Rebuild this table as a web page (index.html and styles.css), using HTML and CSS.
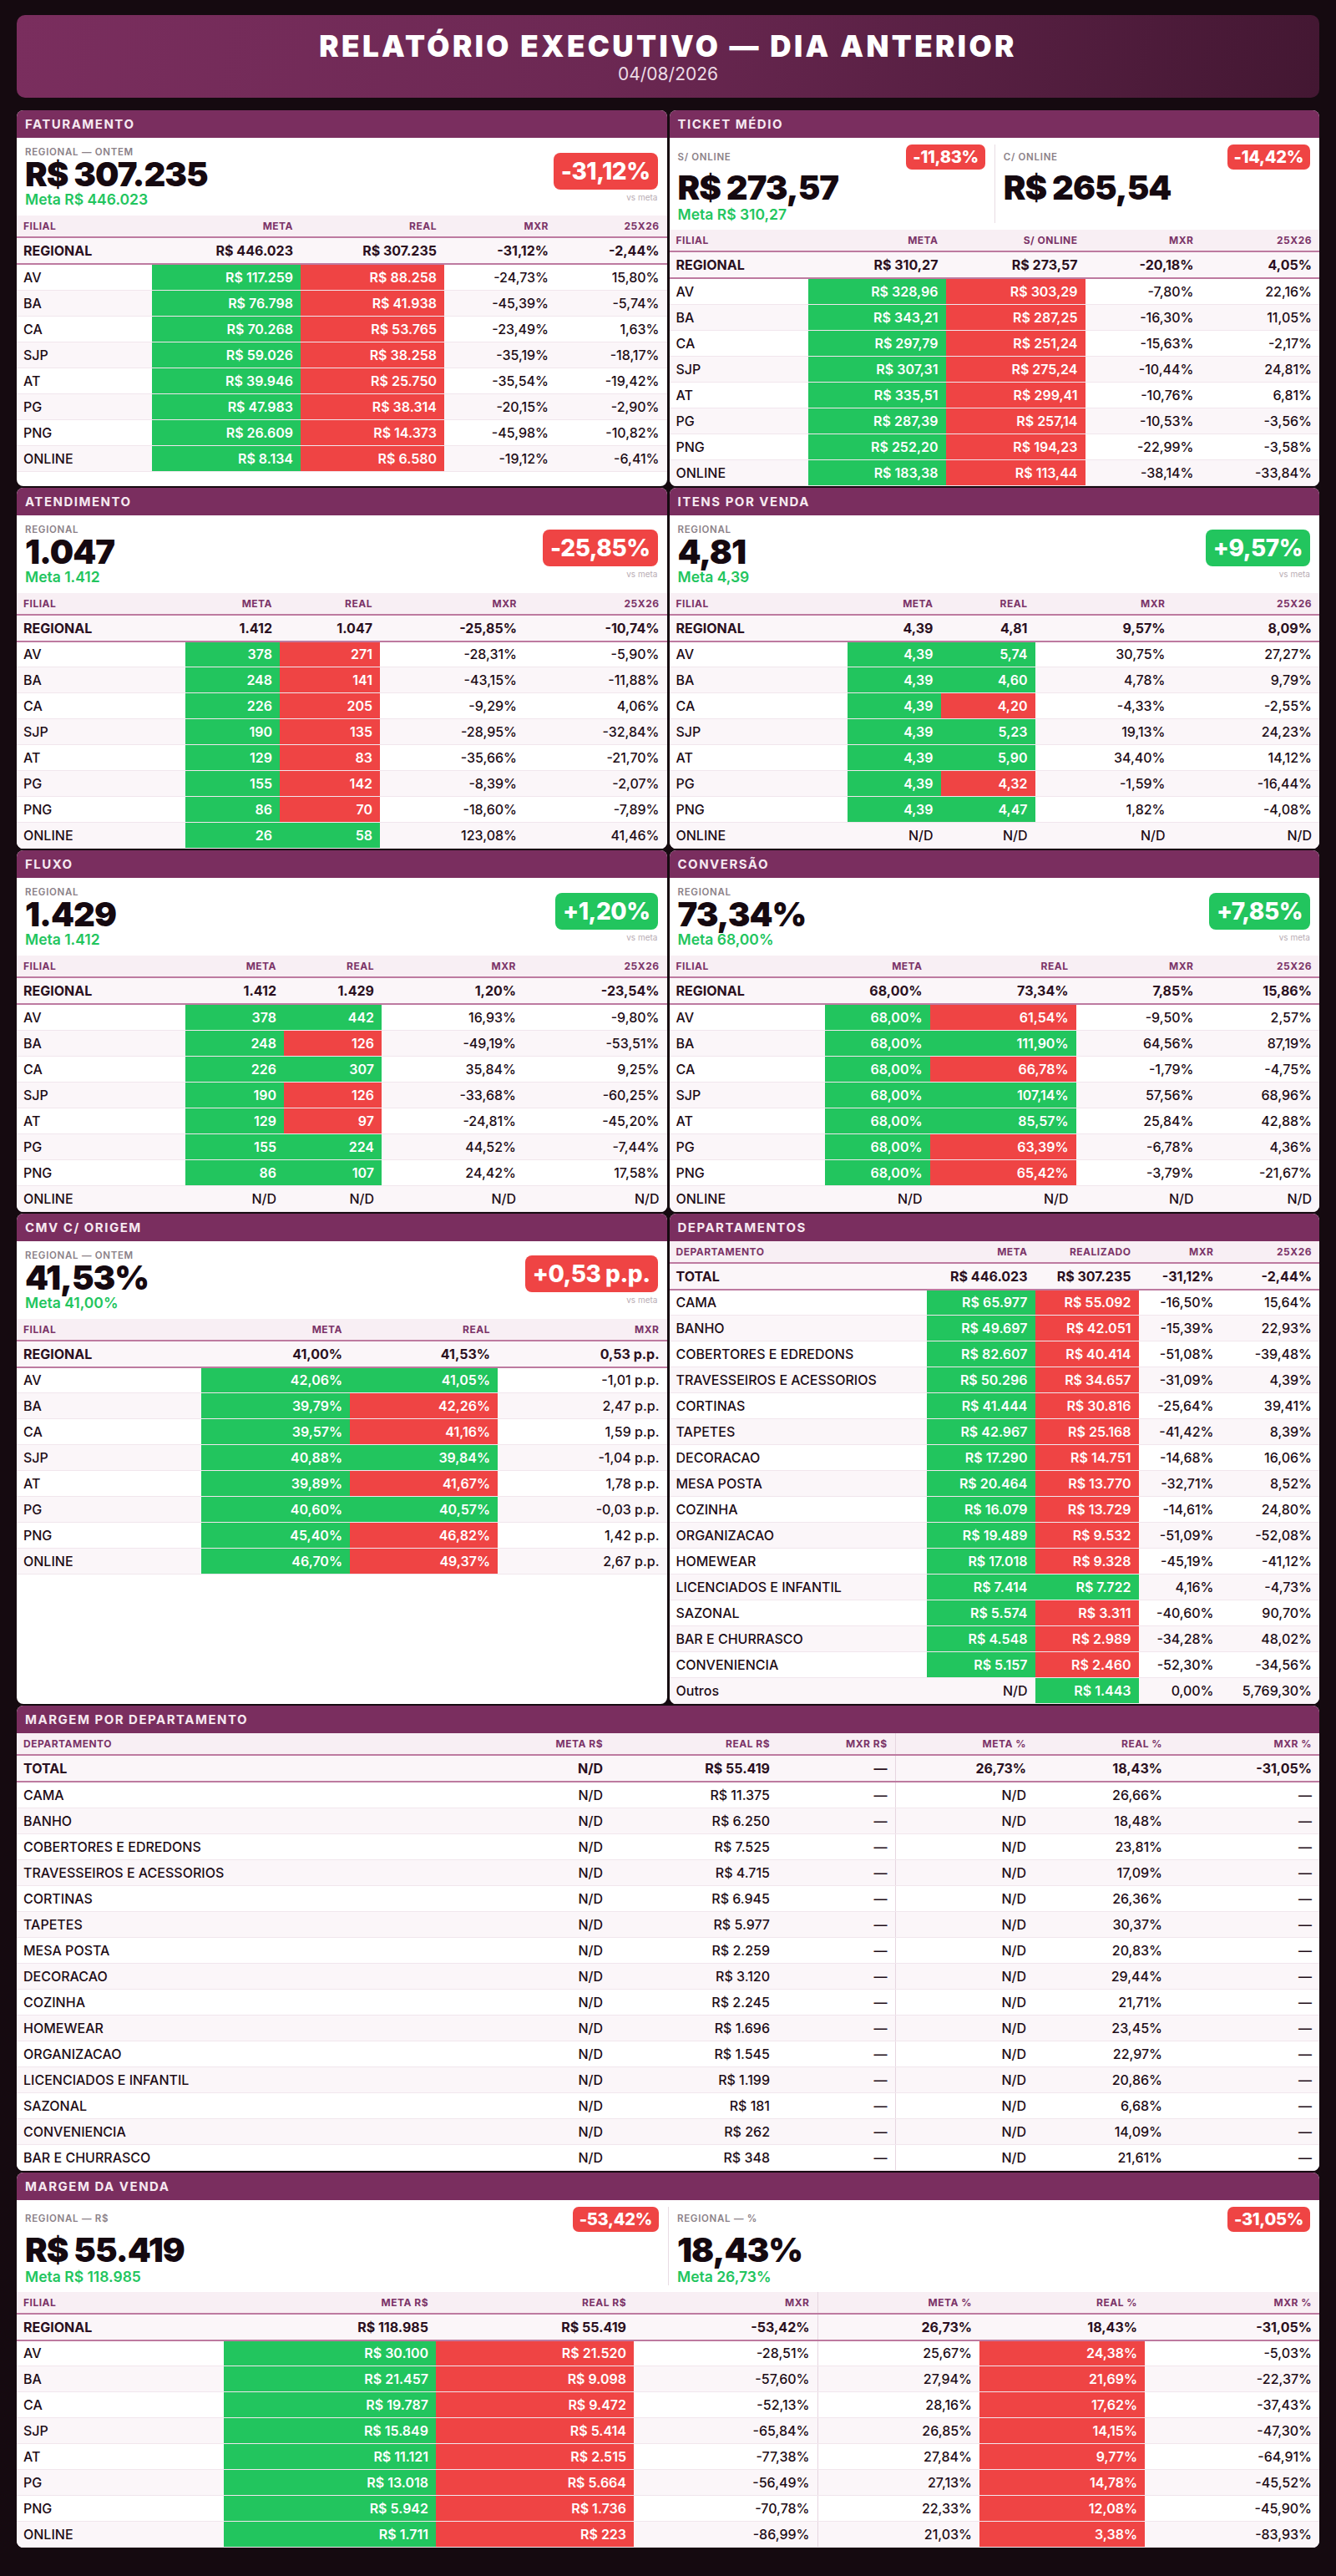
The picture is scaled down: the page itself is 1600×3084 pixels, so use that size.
FILE: index.html
```html
<!DOCTYPE html>
<html lang="pt-BR">
<head>
<meta charset="utf-8">
<title>Relatório Executivo — Dia Anterior</title>
<link rel="stylesheet" href="styles.css">
</head>
<body>
<div class="page">
  <header class="hero">
    <h1>RELATÓRIO EXECUTIVO — DIA ANTERIOR</h1>
    <div class="hero-date">04/08/2026</div>
  </header>

  <main class="grid">
    <!-- FATURAMENTO -->
    <section class="card">
      <div class="card-title">FATURAMENTO</div>
      <div class="kpi">
        <div class="kpi-main">
          <div class="kpi-label">REGIONAL — ONTEM</div>
          <div class="kpi-value">R$ 307.235</div>
          <div class="kpi-meta">Meta R$ 446.023</div>
        </div>
        <div class="badge-wrap">
          <div class="badge neg">-31,12%</div>
          <div class="vs">vs meta</div>
        </div>
      </div>
      <table class="tbl t-fat">
        <thead><tr><th>FILIAL</th><th>META</th><th>REAL</th><th>MXR</th><th>25X26</th></tr></thead>
        <tbody>
          <tr class="reg"><td>REGIONAL</td><td>R$ 446.023</td><td>R$ 307.235</td><td>-31,12%</td><td>-2,44%</td></tr>
          <tr><td>AV</td><td class="g">R$ 117.259</td><td class="r">R$ 88.258</td><td>-24,73%</td><td>15,80%</td></tr>
          <tr><td>BA</td><td class="g">R$ 76.798</td><td class="r">R$ 41.938</td><td>-45,39%</td><td>-5,74%</td></tr>
          <tr><td>CA</td><td class="g">R$ 70.268</td><td class="r">R$ 53.765</td><td>-23,49%</td><td>1,63%</td></tr>
          <tr><td>SJP</td><td class="g">R$ 59.026</td><td class="r">R$ 38.258</td><td>-35,19%</td><td>-18,17%</td></tr>
          <tr><td>AT</td><td class="g">R$ 39.946</td><td class="r">R$ 25.750</td><td>-35,54%</td><td>-19,42%</td></tr>
          <tr><td>PG</td><td class="g">R$ 47.983</td><td class="r">R$ 38.314</td><td>-20,15%</td><td>-2,90%</td></tr>
          <tr><td>PNG</td><td class="g">R$ 26.609</td><td class="r">R$ 14.373</td><td>-45,98%</td><td>-10,82%</td></tr>
          <tr><td>ONLINE</td><td class="g">R$ 8.134</td><td class="r">R$ 6.580</td><td>-19,12%</td><td>-6,41%</td></tr>
        </tbody>
      </table>
    </section>

    <!-- TICKET MÉDIO -->
    <section class="card">
      <div class="card-title">TICKET MÉDIO</div>
      <div class="kpi2">
        <div class="half">
          <div class="half-top">
            <div class="kpi-label">S/ ONLINE</div>
            <div class="badge sm neg">-11,83%</div>
          </div>
          <div class="kpi-value tall">R$ 273,57</div>
          <div class="kpi-meta">Meta R$ 310,27</div>
        </div>
        <div class="half">
          <div class="half-top">
            <div class="kpi-label">C/ ONLINE</div>
            <div class="badge sm neg">-14,42%</div>
          </div>
          <div class="kpi-value tall">R$ 265,54</div>
        </div>
      </div>
      <table class="tbl t-tkt">
        <thead><tr><th>FILIAL</th><th>META</th><th>S/ ONLINE</th><th>MXR</th><th>25X26</th></tr></thead>
        <tbody>
          <tr class="reg"><td>REGIONAL</td><td>R$ 310,27</td><td>R$ 273,57</td><td>-20,18%</td><td>4,05%</td></tr>
          <tr><td>AV</td><td class="g">R$ 328,96</td><td class="r">R$ 303,29</td><td>-7,80%</td><td>22,16%</td></tr>
          <tr><td>BA</td><td class="g">R$ 343,21</td><td class="r">R$ 287,25</td><td>-16,30%</td><td>11,05%</td></tr>
          <tr><td>CA</td><td class="g">R$ 297,79</td><td class="r">R$ 251,24</td><td>-15,63%</td><td>-2,17%</td></tr>
          <tr><td>SJP</td><td class="g">R$ 307,31</td><td class="r">R$ 275,24</td><td>-10,44%</td><td>24,81%</td></tr>
          <tr><td>AT</td><td class="g">R$ 335,51</td><td class="r">R$ 299,41</td><td>-10,76%</td><td>6,81%</td></tr>
          <tr><td>PG</td><td class="g">R$ 287,39</td><td class="r">R$ 257,14</td><td>-10,53%</td><td>-3,56%</td></tr>
          <tr><td>PNG</td><td class="g">R$ 252,20</td><td class="r">R$ 194,23</td><td>-22,99%</td><td>-3,58%</td></tr>
          <tr><td>ONLINE</td><td class="g">R$ 183,38</td><td class="r">R$ 113,44</td><td>-38,14%</td><td>-33,84%</td></tr>
        </tbody>
      </table>
    </section>

    <!-- ATENDIMENTO -->
    <section class="card">
      <div class="card-title">ATENDIMENTO</div>
      <div class="kpi">
        <div class="kpi-main">
          <div class="kpi-label">REGIONAL</div>
          <div class="kpi-value">1.047</div>
          <div class="kpi-meta">Meta 1.412</div>
        </div>
        <div class="badge-wrap">
          <div class="badge neg">-25,85%</div>
          <div class="vs">vs meta</div>
        </div>
      </div>
      <table class="tbl t-atd">
        <thead><tr><th>FILIAL</th><th>META</th><th>REAL</th><th>MXR</th><th>25X26</th></tr></thead>
        <tbody>
          <tr class="reg"><td>REGIONAL</td><td>1.412</td><td>1.047</td><td>-25,85%</td><td>-10,74%</td></tr>
          <tr><td>AV</td><td class="g">378</td><td class="r">271</td><td>-28,31%</td><td>-5,90%</td></tr>
          <tr><td>BA</td><td class="g">248</td><td class="r">141</td><td>-43,15%</td><td>-11,88%</td></tr>
          <tr><td>CA</td><td class="g">226</td><td class="r">205</td><td>-9,29%</td><td>4,06%</td></tr>
          <tr><td>SJP</td><td class="g">190</td><td class="r">135</td><td>-28,95%</td><td>-32,84%</td></tr>
          <tr><td>AT</td><td class="g">129</td><td class="r">83</td><td>-35,66%</td><td>-21,70%</td></tr>
          <tr><td>PG</td><td class="g">155</td><td class="r">142</td><td>-8,39%</td><td>-2,07%</td></tr>
          <tr><td>PNG</td><td class="g">86</td><td class="r">70</td><td>-18,60%</td><td>-7,89%</td></tr>
          <tr><td>ONLINE</td><td class="g">26</td><td class="g">58</td><td>123,08%</td><td>41,46%</td></tr>
        </tbody>
      </table>
    </section>

    <!-- ITENS POR VENDA -->
    <section class="card">
      <div class="card-title">ITENS POR VENDA</div>
      <div class="kpi">
        <div class="kpi-main">
          <div class="kpi-label">REGIONAL</div>
          <div class="kpi-value">4,81</div>
          <div class="kpi-meta">Meta 4,39</div>
        </div>
        <div class="badge-wrap">
          <div class="badge pos">+9,57%</div>
          <div class="vs">vs meta</div>
        </div>
      </div>
      <table class="tbl t-itn">
        <thead><tr><th>FILIAL</th><th>META</th><th>REAL</th><th>MXR</th><th>25X26</th></tr></thead>
        <tbody>
          <tr class="reg"><td>REGIONAL</td><td>4,39</td><td>4,81</td><td>9,57%</td><td>8,09%</td></tr>
          <tr><td>AV</td><td class="g">4,39</td><td class="g">5,74</td><td>30,75%</td><td>27,27%</td></tr>
          <tr><td>BA</td><td class="g">4,39</td><td class="g">4,60</td><td>4,78%</td><td>9,79%</td></tr>
          <tr><td>CA</td><td class="g">4,39</td><td class="r">4,20</td><td>-4,33%</td><td>-2,55%</td></tr>
          <tr><td>SJP</td><td class="g">4,39</td><td class="g">5,23</td><td>19,13%</td><td>24,23%</td></tr>
          <tr><td>AT</td><td class="g">4,39</td><td class="g">5,90</td><td>34,40%</td><td>14,12%</td></tr>
          <tr><td>PG</td><td class="g">4,39</td><td class="r">4,32</td><td>-1,59%</td><td>-16,44%</td></tr>
          <tr><td>PNG</td><td class="g">4,39</td><td class="g">4,47</td><td>1,82%</td><td>-4,08%</td></tr>
          <tr><td>ONLINE</td><td>N/D</td><td>N/D</td><td>N/D</td><td>N/D</td></tr>
        </tbody>
      </table>
    </section>

    <!-- FLUXO -->
    <section class="card">
      <div class="card-title">FLUXO</div>
      <div class="kpi">
        <div class="kpi-main">
          <div class="kpi-label">REGIONAL</div>
          <div class="kpi-value">1.429</div>
          <div class="kpi-meta">Meta 1.412</div>
        </div>
        <div class="badge-wrap">
          <div class="badge pos">+1,20%</div>
          <div class="vs">vs meta</div>
        </div>
      </div>
      <table class="tbl t-flx">
        <thead><tr><th>FILIAL</th><th>META</th><th>REAL</th><th>MXR</th><th>25X26</th></tr></thead>
        <tbody>
          <tr class="reg"><td>REGIONAL</td><td>1.412</td><td>1.429</td><td>1,20%</td><td>-23,54%</td></tr>
          <tr><td>AV</td><td class="g">378</td><td class="g">442</td><td>16,93%</td><td>-9,80%</td></tr>
          <tr><td>BA</td><td class="g">248</td><td class="r">126</td><td>-49,19%</td><td>-53,51%</td></tr>
          <tr><td>CA</td><td class="g">226</td><td class="g">307</td><td>35,84%</td><td>9,25%</td></tr>
          <tr><td>SJP</td><td class="g">190</td><td class="r">126</td><td>-33,68%</td><td>-60,25%</td></tr>
          <tr><td>AT</td><td class="g">129</td><td class="r">97</td><td>-24,81%</td><td>-45,20%</td></tr>
          <tr><td>PG</td><td class="g">155</td><td class="g">224</td><td>44,52%</td><td>-7,44%</td></tr>
          <tr><td>PNG</td><td class="g">86</td><td class="g">107</td><td>24,42%</td><td>17,58%</td></tr>
          <tr><td>ONLINE</td><td>N/D</td><td>N/D</td><td>N/D</td><td>N/D</td></tr>
        </tbody>
      </table>
    </section>

    <!-- CONVERSÃO -->
    <section class="card">
      <div class="card-title">CONVERSÃO</div>
      <div class="kpi">
        <div class="kpi-main">
          <div class="kpi-label">REGIONAL</div>
          <div class="kpi-value">73,34%</div>
          <div class="kpi-meta">Meta 68,00%</div>
        </div>
        <div class="badge-wrap">
          <div class="badge pos">+7,85%</div>
          <div class="vs">vs meta</div>
        </div>
      </div>
      <table class="tbl t-cnv">
        <thead><tr><th>FILIAL</th><th>META</th><th>REAL</th><th>MXR</th><th>25X26</th></tr></thead>
        <tbody>
          <tr class="reg"><td>REGIONAL</td><td>68,00%</td><td>73,34%</td><td>7,85%</td><td>15,86%</td></tr>
          <tr><td>AV</td><td class="g">68,00%</td><td class="r">61,54%</td><td>-9,50%</td><td>2,57%</td></tr>
          <tr><td>BA</td><td class="g">68,00%</td><td class="g">111,90%</td><td>64,56%</td><td>87,19%</td></tr>
          <tr><td>CA</td><td class="g">68,00%</td><td class="r">66,78%</td><td>-1,79%</td><td>-4,75%</td></tr>
          <tr><td>SJP</td><td class="g">68,00%</td><td class="g">107,14%</td><td>57,56%</td><td>68,96%</td></tr>
          <tr><td>AT</td><td class="g">68,00%</td><td class="g">85,57%</td><td>25,84%</td><td>42,88%</td></tr>
          <tr><td>PG</td><td class="g">68,00%</td><td class="r">63,39%</td><td>-6,78%</td><td>4,36%</td></tr>
          <tr><td>PNG</td><td class="g">68,00%</td><td class="r">65,42%</td><td>-3,79%</td><td>-21,67%</td></tr>
          <tr><td>ONLINE</td><td>N/D</td><td>N/D</td><td>N/D</td><td>N/D</td></tr>
        </tbody>
      </table>
    </section>

    <!-- CMV C/ ORIGEM -->
    <section class="card">
      <div class="card-title">CMV C/ ORIGEM</div>
      <div class="kpi">
        <div class="kpi-main">
          <div class="kpi-label">REGIONAL — ONTEM</div>
          <div class="kpi-value">41,53%</div>
          <div class="kpi-meta">Meta 41,00%</div>
        </div>
        <div class="badge-wrap">
          <div class="badge neg">+0,53 p.p.</div>
          <div class="vs">vs meta</div>
        </div>
      </div>
      <table class="tbl t-cmv">
        <thead><tr><th>FILIAL</th><th>META</th><th>REAL</th><th>MXR</th></tr></thead>
        <tbody>
          <tr class="reg"><td>REGIONAL</td><td>41,00%</td><td>41,53%</td><td>0,53 p.p.</td></tr>
          <tr><td>AV</td><td class="g">42,06%</td><td class="g">41,05%</td><td>-1,01 p.p.</td></tr>
          <tr><td>BA</td><td class="g">39,79%</td><td class="r">42,26%</td><td>2,47 p.p.</td></tr>
          <tr><td>CA</td><td class="g">39,57%</td><td class="r">41,16%</td><td>1,59 p.p.</td></tr>
          <tr><td>SJP</td><td class="g">40,88%</td><td class="g">39,84%</td><td>-1,04 p.p.</td></tr>
          <tr><td>AT</td><td class="g">39,89%</td><td class="r">41,67%</td><td>1,78 p.p.</td></tr>
          <tr><td>PG</td><td class="g">40,60%</td><td class="g">40,57%</td><td>-0,03 p.p.</td></tr>
          <tr><td>PNG</td><td class="g">45,40%</td><td class="r">46,82%</td><td>1,42 p.p.</td></tr>
          <tr><td>ONLINE</td><td class="g">46,70%</td><td class="r">49,37%</td><td>2,67 p.p.</td></tr>
        </tbody>
      </table>
    </section>

    <!-- DEPARTAMENTOS -->
    <section class="card">
      <div class="card-title">DEPARTAMENTOS</div>
      <table class="tbl t-dep">
        <thead><tr><th>DEPARTAMENTO</th><th>META</th><th>REALIZADO</th><th>MXR</th><th>25X26</th></tr></thead>
        <tbody>
          <tr class="reg"><td>TOTAL</td><td>R$ 446.023</td><td>R$ 307.235</td><td>-31,12%</td><td>-2,44%</td></tr>
          <tr><td>CAMA</td><td class="g">R$ 65.977</td><td class="r">R$ 55.092</td><td>-16,50%</td><td>15,64%</td></tr>
          <tr><td>BANHO</td><td class="g">R$ 49.697</td><td class="r">R$ 42.051</td><td>-15,39%</td><td>22,93%</td></tr>
          <tr><td>COBERTORES E EDREDONS</td><td class="g">R$ 82.607</td><td class="r">R$ 40.414</td><td>-51,08%</td><td>-39,48%</td></tr>
          <tr><td>TRAVESSEIROS E ACESSORIOS</td><td class="g">R$ 50.296</td><td class="r">R$ 34.657</td><td>-31,09%</td><td>4,39%</td></tr>
          <tr><td>CORTINAS</td><td class="g">R$ 41.444</td><td class="r">R$ 30.816</td><td>-25,64%</td><td>39,41%</td></tr>
          <tr><td>TAPETES</td><td class="g">R$ 42.967</td><td class="r">R$ 25.168</td><td>-41,42%</td><td>8,39%</td></tr>
          <tr><td>DECORACAO</td><td class="g">R$ 17.290</td><td class="r">R$ 14.751</td><td>-14,68%</td><td>16,06%</td></tr>
          <tr><td>MESA POSTA</td><td class="g">R$ 20.464</td><td class="r">R$ 13.770</td><td>-32,71%</td><td>8,52%</td></tr>
          <tr><td>COZINHA</td><td class="g">R$ 16.079</td><td class="r">R$ 13.729</td><td>-14,61%</td><td>24,80%</td></tr>
          <tr><td>ORGANIZACAO</td><td class="g">R$ 19.489</td><td class="r">R$ 9.532</td><td>-51,09%</td><td>-52,08%</td></tr>
          <tr><td>HOMEWEAR</td><td class="g">R$ 17.018</td><td class="r">R$ 9.328</td><td>-45,19%</td><td>-41,12%</td></tr>
          <tr><td>LICENCIADOS E INFANTIL</td><td class="g">R$ 7.414</td><td class="g">R$ 7.722</td><td>4,16%</td><td>-4,73%</td></tr>
          <tr><td>SAZONAL</td><td class="g">R$ 5.574</td><td class="r">R$ 3.311</td><td>-40,60%</td><td>90,70%</td></tr>
          <tr><td>BAR E CHURRASCO</td><td class="g">R$ 4.548</td><td class="r">R$ 2.989</td><td>-34,28%</td><td>48,02%</td></tr>
          <tr><td>CONVENIENCIA</td><td class="g">R$ 5.157</td><td class="r">R$ 2.460</td><td>-52,30%</td><td>-34,56%</td></tr>
          <tr><td>Outros</td><td>N/D</td><td class="g">R$ 1.443</td><td>0,00%</td><td>5,769,30%</td></tr>
        </tbody>
      </table>
    </section>

    <!-- MARGEM POR DEPARTAMENTO -->
    <section class="card wide">
      <div class="card-title">MARGEM POR DEPARTAMENTO</div>
      <table class="tbl t-mpd">
        <thead><tr><th>DEPARTAMENTO</th><th>META R$</th><th>REAL R$</th><th>MXR R$</th><th class="sep">META %</th><th>REAL %</th><th>MXR %</th></tr></thead>
        <tbody>
          <tr class="reg"><td>TOTAL</td><td>N/D</td><td>R$ 55.419</td><td>—</td><td class="sep">26,73%</td><td>18,43%</td><td>-31,05%</td></tr>
          <tr><td>CAMA</td><td>N/D</td><td>R$ 11.375</td><td>—</td><td class="sep">N/D</td><td>26,66%</td><td>—</td></tr>
          <tr><td>BANHO</td><td>N/D</td><td>R$ 6.250</td><td>—</td><td class="sep">N/D</td><td>18,48%</td><td>—</td></tr>
          <tr><td>COBERTORES E EDREDONS</td><td>N/D</td><td>R$ 7.525</td><td>—</td><td class="sep">N/D</td><td>23,81%</td><td>—</td></tr>
          <tr><td>TRAVESSEIROS E ACESSORIOS</td><td>N/D</td><td>R$ 4.715</td><td>—</td><td class="sep">N/D</td><td>17,09%</td><td>—</td></tr>
          <tr><td>CORTINAS</td><td>N/D</td><td>R$ 6.945</td><td>—</td><td class="sep">N/D</td><td>26,36%</td><td>—</td></tr>
          <tr><td>TAPETES</td><td>N/D</td><td>R$ 5.977</td><td>—</td><td class="sep">N/D</td><td>30,37%</td><td>—</td></tr>
          <tr><td>MESA POSTA</td><td>N/D</td><td>R$ 2.259</td><td>—</td><td class="sep">N/D</td><td>20,83%</td><td>—</td></tr>
          <tr><td>DECORACAO</td><td>N/D</td><td>R$ 3.120</td><td>—</td><td class="sep">N/D</td><td>29,44%</td><td>—</td></tr>
          <tr><td>COZINHA</td><td>N/D</td><td>R$ 2.245</td><td>—</td><td class="sep">N/D</td><td>21,71%</td><td>—</td></tr>
          <tr><td>HOMEWEAR</td><td>N/D</td><td>R$ 1.696</td><td>—</td><td class="sep">N/D</td><td>23,45%</td><td>—</td></tr>
          <tr><td>ORGANIZACAO</td><td>N/D</td><td>R$ 1.545</td><td>—</td><td class="sep">N/D</td><td>22,97%</td><td>—</td></tr>
          <tr><td>LICENCIADOS E INFANTIL</td><td>N/D</td><td>R$ 1.199</td><td>—</td><td class="sep">N/D</td><td>20,86%</td><td>—</td></tr>
          <tr><td>SAZONAL</td><td>N/D</td><td>R$ 181</td><td>—</td><td class="sep">N/D</td><td>6,68%</td><td>—</td></tr>
          <tr><td>CONVENIENCIA</td><td>N/D</td><td>R$ 262</td><td>—</td><td class="sep">N/D</td><td>14,09%</td><td>—</td></tr>
          <tr><td>BAR E CHURRASCO</td><td>N/D</td><td>R$ 348</td><td>—</td><td class="sep">N/D</td><td>21,61%</td><td>—</td></tr>
        </tbody>
      </table>
    </section>

    <!-- MARGEM DA VENDA -->
    <section class="card wide">
      <div class="card-title">MARGEM DA VENDA</div>
      <div class="kpi2">
        <div class="half">
          <div class="half-top">
            <div class="kpi-label">REGIONAL — R$</div>
            <div class="badge sm neg">-53,42%</div>
          </div>
          <div class="kpi-value tall">R$ 55.419</div>
          <div class="kpi-meta">Meta R$ 118.985</div>
        </div>
        <div class="half">
          <div class="half-top">
            <div class="kpi-label">REGIONAL — %</div>
            <div class="badge sm neg">-31,05%</div>
          </div>
          <div class="kpi-value tall">18,43%</div>
          <div class="kpi-meta">Meta 26,73%</div>
        </div>
      </div>
      <table class="tbl t-mdv">
        <thead><tr><th>FILIAL</th><th>META R$</th><th>REAL R$</th><th>MXR</th><th class="sep">META %</th><th>REAL %</th><th>MXR %</th></tr></thead>
        <tbody>
          <tr class="reg"><td>REGIONAL</td><td>R$ 118.985</td><td>R$ 55.419</td><td>-53,42%</td><td class="sep">26,73%</td><td>18,43%</td><td>-31,05%</td></tr>
          <tr><td>AV</td><td class="g">R$ 30.100</td><td class="r">R$ 21.520</td><td>-28,51%</td><td class="sep">25,67%</td><td class="r">24,38%</td><td>-5,03%</td></tr>
          <tr><td>BA</td><td class="g">R$ 21.457</td><td class="r">R$ 9.098</td><td>-57,60%</td><td class="sep">27,94%</td><td class="r">21,69%</td><td>-22,37%</td></tr>
          <tr><td>CA</td><td class="g">R$ 19.787</td><td class="r">R$ 9.472</td><td>-52,13%</td><td class="sep">28,16%</td><td class="r">17,62%</td><td>-37,43%</td></tr>
          <tr><td>SJP</td><td class="g">R$ 15.849</td><td class="r">R$ 5.414</td><td>-65,84%</td><td class="sep">26,85%</td><td class="r">14,15%</td><td>-47,30%</td></tr>
          <tr><td>AT</td><td class="g">R$ 11.121</td><td class="r">R$ 2.515</td><td>-77,38%</td><td class="sep">27,84%</td><td class="r">9,77%</td><td>-64,91%</td></tr>
          <tr><td>PG</td><td class="g">R$ 13.018</td><td class="r">R$ 5.664</td><td>-56,49%</td><td class="sep">27,13%</td><td class="r">14,78%</td><td>-45,52%</td></tr>
          <tr><td>PNG</td><td class="g">R$ 5.942</td><td class="r">R$ 1.736</td><td>-70,78%</td><td class="sep">22,33%</td><td class="r">12,08%</td><td>-45,90%</td></tr>
          <tr><td>ONLINE</td><td class="g">R$ 1.711</td><td class="r">R$ 223</td><td>-86,99%</td><td class="sep">21,03%</td><td class="r">3,38%</td><td>-83,93%</td></tr>
        </tbody>
      </table>
    </section>
  </main>
</div>
</body>
</html>
```

FILE: styles.css
```css
* { box-sizing: border-box; }

html, body {
  margin: 0;
  padding: 0;
  background: #150a10;
}

body {
  font-family: Inter, "Noto Sans", "Liberation Sans", sans-serif;
  color: #1d0c16;
}

.page {
  padding: 18px 20px 33px;
}

/* ---------- header ---------- */
.hero {
  height: 99px;
  border-radius: 10px;
  background: linear-gradient(100deg, #7a2e5e 0%, #6c2853 45%, #431732 100%);
  display: flex;
  flex-direction: column;
  align-items: center;
  justify-content: center;
  margin-bottom: 15px;
}

.hero h1 {
  margin: 0;
  color: #ffffff;
  font-size: 35px;
  line-height: 42px;
  font-weight: 900;
  letter-spacing: 3.4px;
}

.hero-date {
  margin-top: 1px;
  color: #ecdbe5;
  font-size: 21px;
  line-height: 24px;
  font-weight: 400;
}

/* ---------- grid ---------- */
.grid {
  display: grid;
  grid-template-columns: 1fr 1fr;
  column-gap: 3px;
  row-gap: 2px;
}

.card {
  background: #ffffff;
  border-radius: 8px;
  overflow: hidden;
}

.card.wide {
  grid-column: 1 / -1;
}

.card-title {
  height: 33px;
  display: flex;
  align-items: center;
  padding: 0 10px;
  background: #7a2e5f;
  color: #f6e9f1;
  font-size: 15px;
  font-weight: 700;
  letter-spacing: 1.5px;
}

/* ---------- KPI blocks ---------- */
.kpi {
  display: flex;
  justify-content: space-between;
  align-items: center;
  padding: 11px 11px 9px 10px;
}

.kpi-label {
  font-size: 11.5px;
  line-height: 13px;
  font-weight: 600;
  color: #8b8188;
  letter-spacing: 0.7px;
}

.kpi-value {
  font-size: 40px;
  line-height: 40px;
  font-weight: 900;
  letter-spacing: -1px;
  color: #150910;
}

.kpi-value.tall {
  line-height: 44px;
}

.kpi-meta {
  font-size: 17.5px;
  line-height: 20px;
  font-weight: 600;
  color: #22c55e;
}

.badge-wrap {
  display: flex;
  flex-direction: column;
  align-items: flex-end;
}

.badge {
  color: #ffffff;
  font-size: 28px;
  line-height: 44px;
  font-weight: 800;
  letter-spacing: -0.5px;
  padding: 0 9px;
  border-radius: 8px;
}

.badge.sm {
  font-size: 20px;
  line-height: 30px;
  padding: 0 8px;
  border-radius: 7px;
  letter-spacing: -0.3px;
}

.badge.neg { background: #ef4444; }
.badge.pos { background: #22c55e; }

.vs {
  margin-top: 2px;
  font-size: 10px;
  line-height: 14px;
  color: #b9adb4;
}

.kpi2 {
  display: grid;
  grid-template-columns: 1fr 1fr;
  padding: 8px 0;
}

.half {
  padding: 0 11px 0 10px;
}

.half + .half {
  border-left: 1px solid #e8dce3;
}

.half-top {
  height: 30px;
  display: flex;
  justify-content: space-between;
  align-items: center;
}

/* ---------- tables ---------- */
.tbl {
  width: 100%;
  border-collapse: collapse;
  table-layout: fixed;
}

.tbl th {
  height: 26px;
  padding: 0 9px 0 8px;
  background: #f8eff4;
  color: #7b3468;
  font-size: 12px;
  font-weight: 700;
  letter-spacing: 0.5px;
  text-align: right;
  white-space: nowrap;
}

.tbl td {
  height: 31px;
  padding: 0 9px 0 8px;
  font-size: 16px;
  font-weight: 500;
  text-align: right;
  white-space: nowrap;
  border-bottom: 1px solid #f1e6ed;
  color: #1d0c16;
}

.tbl th:first-child,
.tbl td:first-child {
  text-align: left;
}

.tbl tbody tr:nth-child(odd) td { background: #fbf6f9; }
.tbl tbody tr:nth-child(even) td { background: #ffffff; }

.tbl tr.reg td {
  height: 32px;
  background: #f3e7ee;
  font-weight: 700;
  color: #2a0f20;
  border-top: 2px solid #bd7aa0;
  border-bottom: 2px solid #bd7aa0;
}

.tbl tbody tr td.g {
  background: #22c55e;
  color: #ffffff;
  font-weight: 600;
}

.tbl tbody tr td.r {
  background: #ef4444;
  color: #ffffff;
  font-weight: 600;
}

.tbl .sep {
  border-left: 1px solid #e6d6e0;
}

/* column widths per table */
.t-fat th:nth-child(1) { width: 162px; }
.t-fat th:nth-child(2) { width: 178px; }
.t-fat th:nth-child(3) { width: 172px; }
.t-fat th:nth-child(4) { width: 134px; }

.t-tkt th:nth-child(1) { width: 166px; }
.t-tkt th:nth-child(2) { width: 165px; }
.t-tkt th:nth-child(3) { width: 167px; }
.t-tkt th:nth-child(4) { width: 139px; }

.t-atd th:nth-child(1) { width: 202px; }
.t-atd th:nth-child(2) { width: 113px; }
.t-atd th:nth-child(3) { width: 120px; }
.t-atd th:nth-child(4) { width: 173px; }

.t-itn th:nth-child(1) { width: 213px; }
.t-itn th:nth-child(2) { width: 112px; }
.t-itn th:nth-child(3) { width: 113px; }
.t-itn th:nth-child(4) { width: 165px; }

.t-flx th:nth-child(1) { width: 202px; }
.t-flx th:nth-child(2) { width: 118px; }
.t-flx th:nth-child(3) { width: 117px; }
.t-flx th:nth-child(4) { width: 170px; }

.t-cnv th:nth-child(1) { width: 186px; }
.t-cnv th:nth-child(2) { width: 126px; }
.t-cnv th:nth-child(3) { width: 175px; }
.t-cnv th:nth-child(4) { width: 150px; }

.t-cmv th:nth-child(1) { width: 221px; }
.t-cmv th:nth-child(2) { width: 178px; }
.t-cmv th:nth-child(3) { width: 177px; }

.t-dep th:nth-child(1) { width: 308px; }
.t-dep th:nth-child(2) { width: 130px; }
.t-dep th:nth-child(3) { width: 124px; }
.t-dep th:nth-child(4) { width: 99px; }

.t-mpd th:nth-child(1) { width: 540px; }
.t-mpd th:nth-child(2) { width: 171px; }
.t-mpd th:nth-child(3) { width: 200px; }
.t-mpd th:nth-child(4) { width: 141px; }
.t-mpd th:nth-child(5) { width: 166px; }
.t-mpd th:nth-child(6) { width: 163px; }

.t-mdv th:nth-child(1) { width: 248px; }
.t-mdv th:nth-child(2) { width: 254px; }
.t-mdv th:nth-child(3) { width: 237px; }
.t-mdv th:nth-child(4) { width: 220px; }
.t-mdv th:nth-child(5) { width: 194px; }
.t-mdv th:nth-child(6) { width: 198px; }
```
